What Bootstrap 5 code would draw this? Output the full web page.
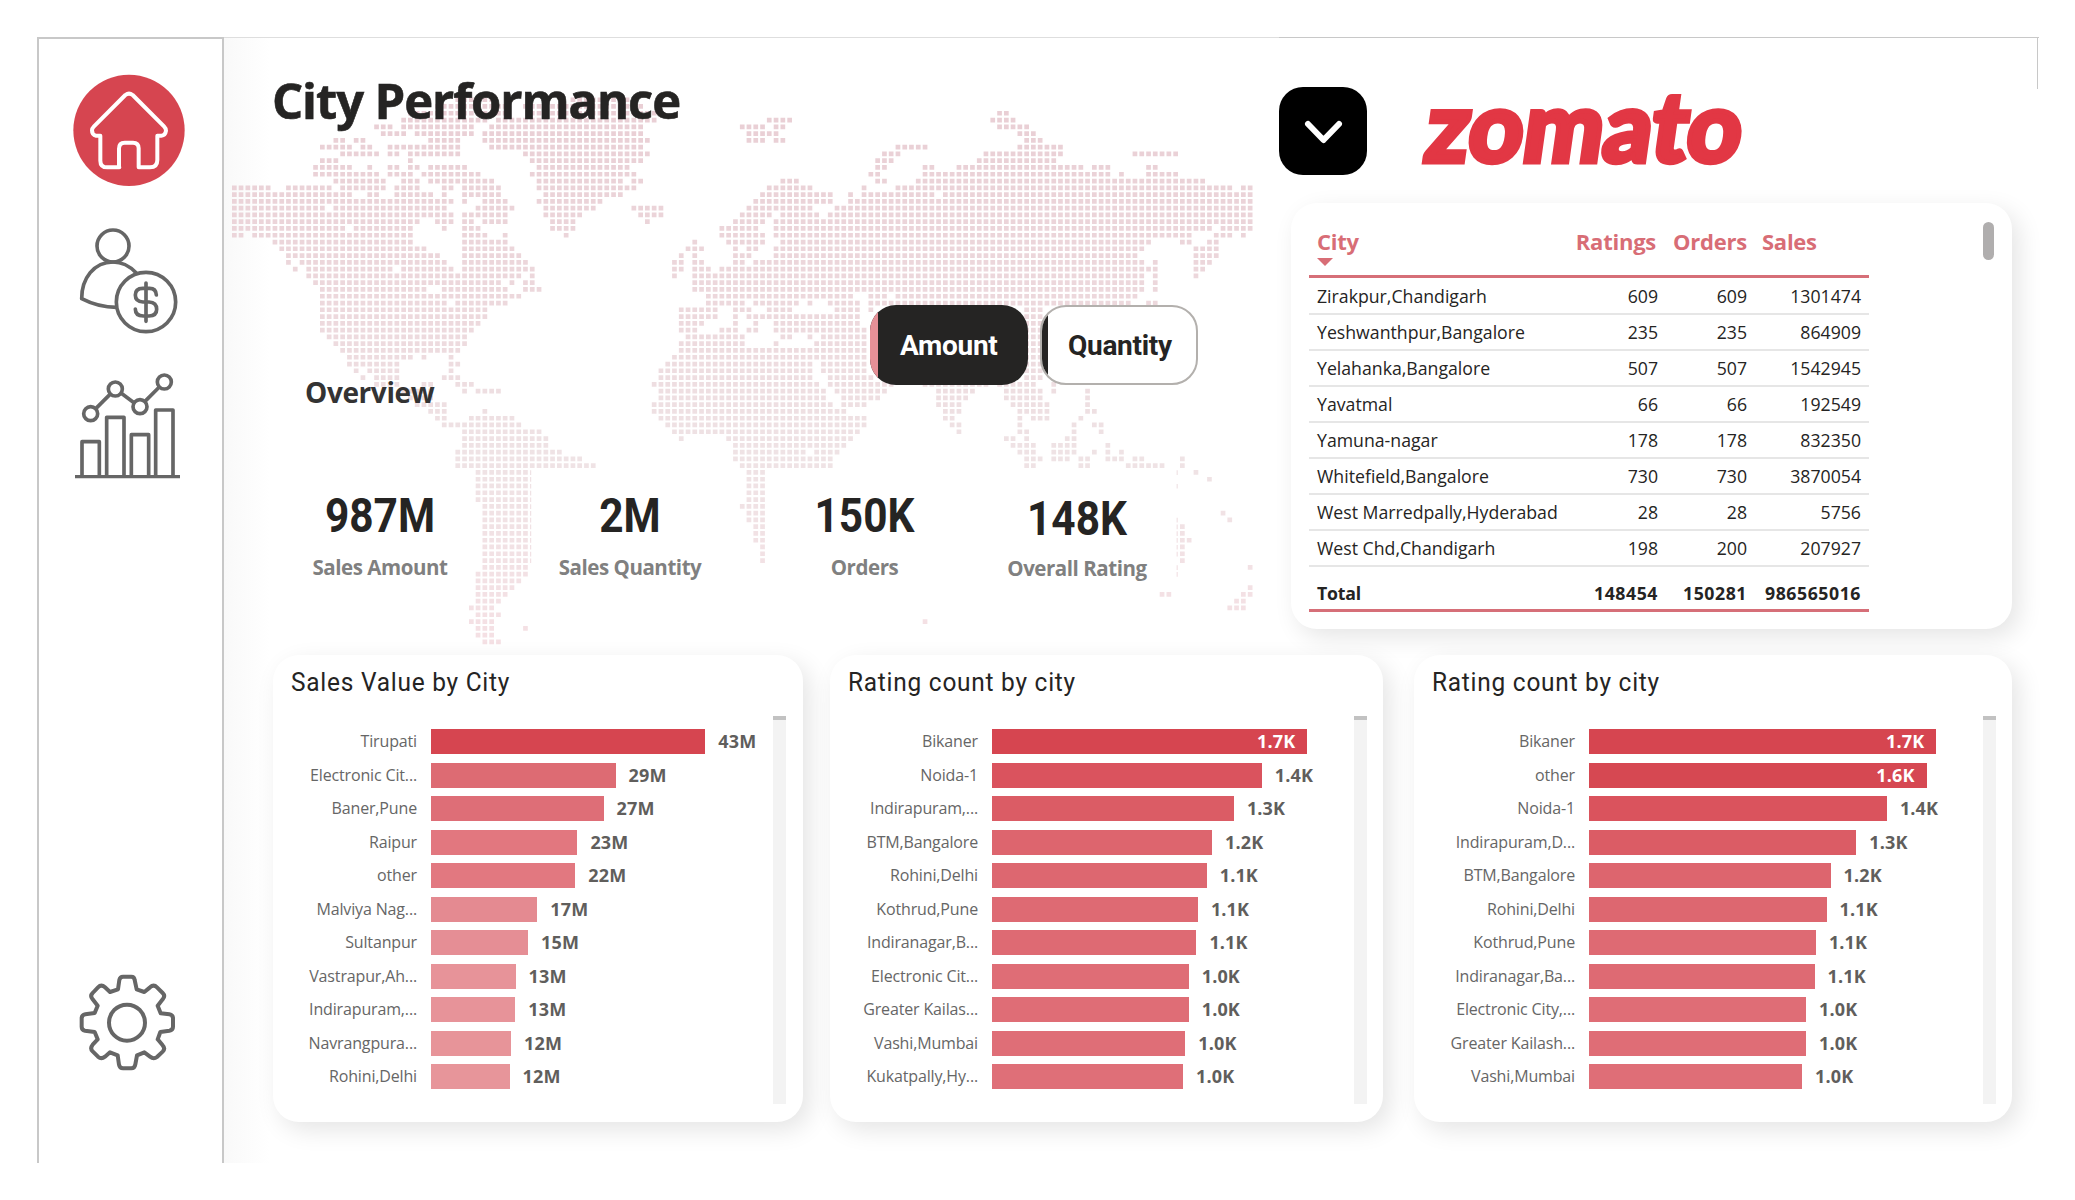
<!DOCTYPE html>
<html lang="en">
<head>
<meta charset="utf-8">
<title>City Performance</title>
<link rel="stylesheet" href="https://cdn.jsdelivr.net/npm/bootstrap@5.3.0/dist/css/bootstrap.min.css">
<style>
body{background:#fff;font-family:"Open Sans","Noto Sans",sans-serif;color:#252423;width:2075px;height:1200px;overflow:hidden}
.frame{margin:37px 0 0 37px;width:2002px;height:1126px}
.rail{width:187px;border:solid #c8c8c8;border-width:2px 2px 0 2px;padding:31px 2px 0 0}
.rail svg{width:120px;height:120px;fill:none;stroke:#666;flex:none}
.stage{background:linear-gradient(90deg,#f9f9f9 0,#fcfcfc 22px,#fff 46px);border-top:1px solid #dedede}
.upper{height:617px}
.hero{width:1055px}
.worldmap{position:absolute;left:0;top:0;pointer-events:none}
.hero-title{font-size:49px;font-weight:700;line-height:64px;letter-spacing:-1.1px;margin:30px 0 0 48px;-webkit-text-stroke:.6px #252423}
.switches{margin:173px 0 0 646px;gap:12px}
.switch{width:158px;height:80px;border-radius:26px;border:2px solid #b3b0ad;background:#fff;overflow:hidden;font:700 28px/76px Roboto,sans-serif;padding-left:19px}
.switch span{letter-spacing:-.3px;position:relative;top:1px}
.switch::before{content:"";width:8px;flex:none;background:#252423;margin-left:-21px;margin-right:20px}
.switch.active{background:#252423;border:0;padding:0;line-height:80px;color:#fff}
.switch.active::before{background:#e69097;margin:0 22px 0 0}
.overview{font-size:28px;font-weight:700;color:#333;line-height:36px;letter-spacing:-.4px;margin:-11px 0 0 81px}
.kpis{margin:81px 0 0 49px}
.kpi{height:116px;text-align:center}
.kpi b{display:block;font:700 49px/50px Roboto,sans-serif;letter-spacing:0;transform:scaleX(.865)}
.kpi-name{font-size:20.5px;font-weight:700;color:#808080;line-height:30px;margin-top:11px;letter-spacing:-.45px}
.side{flex:1;border:solid #c8c8c8;border-width:1px 0 0;margin-top:-1px}
.edge{position:absolute;right:1px;top:-1px;width:1px;height:52px;background:#c8c8c8}
.drop{width:88px;height:88px;border-radius:24px;background:#000;border:0;padding:0}
.panel{background:#fff;border-radius:26px;box-shadow:7px 8px 24px rgba(0,0,0,.105)}
.grid-panel{width:721px;height:426px;margin:28px 0 0 12px;padding:16px 18px 0}
.city-table{width:560px;font-size:17.7px;letter-spacing:0;border-collapse:collapse;table-layout:fixed}
.city-table th,.city-table td{padding:0 8px;text-align:right;white-space:nowrap}
.city-table th:nth-child(2),.city-table td:nth-child(2),.city-table th:nth-child(3),.city-table td:nth-child(3){padding-right:7px}
.city-table th:first-child,.city-table td:first-child{text-align:left}
.city-table thead th{height:57px;font-size:22px;color:#d86d76;vertical-align:top;line-height:28px;padding-top:8px;border-bottom:3px solid #d66f78;letter-spacing:-.25px}
.city-table thead th:last-child{text-align:left}
.city-table thead th:nth-child(2),.city-table thead th:nth-child(3){padding-right:9px}
.city-table td{height:36px;border-bottom:2px solid #e6e6e6;line-height:30px}
.city-table tbody tr:first-child td{height:38px;padding-top:2px}
.city-table tfoot td{height:44px;font-weight:700;border-bottom:3px solid #d66f78;padding-top:10px;letter-spacing:-.2px}
.city-table tfoot td+td{letter-spacing:.55px}
.sorter{width:0;height:0;border:8px solid transparent;border-top-color:#d86d76;border-bottom:0;margin-top:3px}
.thumb{width:11px;height:38px;border-radius:6px;background:#b0aeae;margin-top:3px}
.lower{padding-left:49px}
.chart-panel{height:467px;padding:12px 0 0 18px}
.chart-panel h2{font:400 26px/30px Roboto,sans-serif;letter-spacing:.8px;margin:0;height:48px;transform:scaleX(.94);transform-origin:left}
.bars{margin-top:14px}
.bar-line{height:25px;margin-bottom:8.5px;white-space:nowrap}
.bar-label{font-size:16px;color:#666;text-align:right;letter-spacing:-.15px;margin-right:14px;line-height:25px}
.bar-fill{height:25px;color:#fff;text-align:right;padding-right:12px;line-height:24px}
.bar-value{font-weight:700;font-size:18px;line-height:24px;color:#605e5c;letter-spacing:.15px}
.bar-fill .bar-value{color:#fff}
.bar-line>.bar-value{margin-left:13px}
.track{width:13px;height:384px;background:#f3f3f3;margin-top:5px}
.track::before{content:"";display:block;height:4px;background:#c2c2c2;margin-top:-4px}
</style>
<script src="https://cdn.jsdelivr.net/npm/bootstrap@5.3.0/dist/js/bootstrap.bundle.min.js"></script>
</head>
<body>
<div class="frame d-flex">
  <aside class="rail d-flex flex-column align-items-center flex-shrink-0">
    <svg viewBox="120 120 360 360"><circle cx="297" cy="301" r="167" fill="#d64550" stroke="none"/>
      <path stroke="#fff" stroke-width="12" stroke-linejoin="round" stroke-linecap="round" d="M268 412H232Q211 412 211 392V317H198Q186 315 186 301Q186 295 192 289L286 195Q297 187 308 195L402 289Q408 295 408 302Q406 316 394 317H382V390Q382 412 360 412H326V355Q326 338 309 338H284Q267 338 267 356V412"/></svg>
    <svg viewBox="120 580 360 360" style="margin-top:34px" stroke-width="11"><circle cx="249" cy="646" r="48"/><path d="M319 727Q288 694 249 694C192 694 155 743 155 804Q205 830 260 830" stroke-linejoin="round"/><circle cx="348" cy="814" r="89"/><path stroke-linecap="round" d="M348 757V872M379 793Q378 773 359 773H338Q316 773 316 793Q316 813 339 814H357Q380 815 380 836Q380 856 357 856H340Q316 856 316 835"/></svg>
    <svg viewBox="120 1010 360 360" style="margin-top:23px" stroke-width="11"><path d="M135 1339H450" stroke-width="10"/><path stroke-linejoin="round" d="M156 1337V1234H208V1337M230 1337V1161H282V1337M304 1337V1213H356V1337M377 1337V1139H429V1337"/><circle cx="182" cy="1150" r="21"/><circle cx="256" cy="1076" r="21"/><circle cx="330" cy="1129" r="21"/><circle cx="403" cy="1055" r="21"/><path d="M198 1134L240 1092M274 1089L312 1117M345 1113L388 1070"/></svg>
    <svg viewBox="120 70 360 360" style="margin-top:476px" stroke-width="12"><circle cx="291" cy="249" r="54"/>
      <path stroke-linejoin="round" d="M264 149L268 121Q270 111 279 111H304Q313 111 314 121L320 149L343 157L360 143Q371 133 381 143L398 160Q407 169 398 179L383 198L392 221L418 224Q429 226 429 236V261Q429 271 418 273L391 277L383 299L398 317Q407 327 398 336L381 352Q371 360 360 351L343 338L321 347L316 374Q314 386 304 386H279Q269 386 267 375L263 347L240 338L225 351Q214 360 204 351L188 335Q179 326 188 315L203 299L194 277L165 273Q155 271 155 261V236Q155 226 166 224L194 220L203 198L188 179Q179 169 188 160L204 143Q214 133 225 143L240 157Z"/></svg>
  </aside>
  <main class="stage flex-grow-1 position-relative">
    <svg class="worldmap" width="1055" height="618" viewBox="224 38 1055 618" aria-hidden="true">
      <defs><linearGradient id="fade" gradientUnits="userSpaceOnUse" x1="0" y1="95" x2="0" y2="650"><stop offset="0" stop-color="#e9ced4"/><stop offset=".4" stop-color="#edd9dd"/><stop offset=".65" stop-color="#efe3e5"/><stop offset="1" stop-color="#f5e0e4"/></linearGradient></defs>
      <path id="dots" fill="url(#fade)"/>
    </svg>
    <div class="edge"></div>
    <div class="upper d-flex position-relative">
      <section class="hero">
        <h1 class="hero-title">City Performance</h1>
        <div class="switches d-flex">
          <div class="switch active d-flex"><span>Amount</span></div>
          <div class="switch d-flex"><span>Quantity</span></div>
        </div>
        <div class="overview">Overview</div>
        <div class="kpis d-flex">
          <div class="kpi" style="width:214px"><b>987M</b><div class="kpi-name">Sales Amount</div></div>
          <div class="kpi" style="width:286px"><b>2M</b><div class="kpi-name">Sales Quantity</div></div>
          <div class="kpi" style="width:183px"><b>150K</b><div class="kpi-name">Orders</div></div>
          <div class="kpi pt-1" style="width:242px"><b style="line-height:47px">148K</b><div class="kpi-name">Overall Rating</div></div>
        </div>
      </section>
      <section class="side">
        <div class="d-flex" style="padding-top:49px">
          <button class="drop" aria-label="Open menu"><svg width="88" height="88" fill="none" stroke="#fff" stroke-width="6" stroke-linecap="round" stroke-linejoin="round"><path d="M29 37L44.5 53L60 37"/></svg></button>
          <svg width="360" height="88" viewBox="1390 87 360 88" style="margin-left:24px" overflow="visible"><text transform="translate(1421 161.500) skewX(-8)" font-family="Lato" font-weight="900" font-size="98" fill="#e23744" stroke="#e23744" stroke-width="5" textLength="316" lengthAdjust="spacingAndGlyphs">zomato</text></svg>
        </div>
        <div class="panel grid-panel d-flex justify-content-between">
          <div>
          <table class="city-table"><colgroup><col style="width:258px"><col style="width:98px"><col style="width:89px"><col style="width:115px"></colgroup>
            <thead><tr><th>City<div class="sorter"></div></th><th>Ratings</th><th>Orders</th><th>Sales</th></tr></thead>
            <tbody>
              <tr><td>Zirakpur,Chandigarh</td><td>609</td><td>609</td><td>1301474</td></tr>
              <tr><td>Yeshwanthpur,Bangalore</td><td>235</td><td>235</td><td>864909</td></tr>
              <tr><td>Yelahanka,Bangalore</td><td>507</td><td>507</td><td>1542945</td></tr>
              <tr><td>Yavatmal</td><td>66</td><td>66</td><td>192549</td></tr>
              <tr><td>Yamuna-nagar</td><td>178</td><td>178</td><td>832350</td></tr>
              <tr><td>Whitefield,Bangalore</td><td>730</td><td>730</td><td>3870054</td></tr>
              <tr><td>West Marredpally,Hyderabad</td><td>28</td><td>28</td><td>5756</td></tr>
              <tr><td>West Chd,Chandigarh</td><td>198</td><td>200</td><td>207927</td></tr>
            </tbody>
            <tfoot><tr><td>Total</td><td>148454</td><td>150281</td><td>986565016</td></tr></tfoot>
          </table></div>
          <div class="thumb"></div>
        </div>
      </section>
    </div>
    <div class="lower d-flex position-relative" id="charts"></div>
  </main>
</div>
<script>
// Land cells of the dotted world map: one entry per row, each a list of column runs
const land = `33-38 50-58|30-40 43-60|26-40 44-62 113-114|25-37 39-62 79-82 112-115|21-23 25-35 38-60 75-78 80-81 113-117|22-25 27-35 37-60 76-80 116-118|15-16 18-19 29-33 37-61 76-78 80-81 117-119|13-17 19-20 23-33 38-60 98-102 116-122|16-21 23-24 26-33 43-61 96-98 111-122 133-139|13-15 26 44-60 95-97 110-121
12-17 20 23-24 26-27 29-34 45-58 95-96 102-103 107-125 127-129 135-136|12-21 23-26 28-36 44-59 94-95 102-129 131 135-139|15-22 25-27 29-38 45-57 59-60 81-83 95-96 101-143|0-5 8-14 16-22 24-27 31-32 34-39 45-59 79-85 93 98-147 149-150|0-17 20-21 24-29 31 34-39 46-57 78-88 91 93-103 105-150|0-32 34 37-40 45-54 77-88 91-150|0-13 15-31 36-41 46-53 59-63 76-85 89-150|0-32 34-40 46-51 60-63 75-79 81-86 88-150|0-27 30-32 34-35 37-40 47-50 61 74-78 80-150|0-16 18-26 31 34-36 47-50 72-77 80-144 146-150
0-1 3-26 34-37 40 49 72-78 80-141 145-147 149|6-26 34-40 68 73-78 81-135 140-141 144-145|7-28 34-41 67-69 74 76-77 80-134 142-145|8-30 34-42 66 68 74-76 80-133 142-145|8 10-31 34-43 65-66 68-69 74-75 77-134 136 142-144|9 11-23 25-32 34-44 65-66 68-70 72-136 142-143|11-42 44 65 68-134 136 142|12-39 41 43-44 68-134 136|13-28 31-40 43-45 68-134 136|13-42 70-91 94-96 98-133
13-31 33-40 70-75 77-83 85 88-92 94-132 135-136|13-37 66-71 74-76 79-82 89-92 94 117-119|13-37 66-71 74 76-92 117-119|13-36 66-69 74 77 80-92 117-119|13-35 66-68 72-74 76-77 80-93 117-119|14-34 67-75 81-82 85 87-93 117-119|15-34 66-75 80 86-93 117-119|16-33 66-93 117-119|17-26 28 32 65-93 117-119|17-24 32-33 64-85 87-93 117-119
18 20-24 32 63-85 87-93 117-119|19 21-24 31-33 63-85 88-94 117-119|21-24 28-29 33-35 62-86 88-97 102-111 113-118 121|25-29 34 36-39 63-87 89-96 104-109 114-119 121 126|26-29 63-87 90-95 104-108 114-119 126|27-31 62-88 90-93 104-107 115-120 126|29-31 37 62-90 105-107 116-120 126-127|30-31 35-41 63-93 105-106 116 118-120 125|31-42 64-93 106-107 116 124 127-128|34-45 65-92 107 116-117 124 128
34-46 66 73-91 114-115 117 123-124|34-46 74-90 115-118 121-124 129|33-48 74-84 86-89 116-118 121-124 127 129 131|33-51 74-88 117-119 121-123 125-126 129-131 133-134 140|33-53 75-88 117-118 125-126 132-137 140|36-43 76-78 142|36-43 76-78 144|36-43 76-78|36-43 76-78|36-43 76-78
37-43 75-78|37-43 76-78 146|37-43 76-78 147|37-43 77-78 140|37-43 77-78 140|37-43 77-78 140-141|37-43 78 140|37-43 78 140|37-43 78 140|37-43 150
36-43|36-42|36-41 150|36-40 137-138 149-150|36-39 148-149|35-38 147-149|36-39|35-38 102|36-38 43|36-38
37-39`.split(/[|\n]/);
let d = "";
const pitch = 6.777, dot = 4.7;
land.forEach((row, r) => row.split(" ").forEach(run => {
  const [a, b = a] = run.split("-").map(Number);
  for (let c = a; c <= b; c++) d += `M${(234.3 + c * 6.772 - dot / 2).toFixed(1)} ${(99.7 + r * pitch - dot / 2).toFixed(1)}h${dot}v${dot}h-${dot}z`;
}));
[55, 57, 62, 63, 64, 65, 66, 67, 69, 70].forEach(r => d += `M1176.6 ${(97.6 + r * pitch).toFixed(1)}h1.2v${dot}h-1.2z`);
for (let r = 55; r < 69; r++) d += `M530 ${(97.6 + r * pitch).toFixed(1)}h1.2v${dot}h-1.2z`;
document.getElementById("dots").setAttribute("d", d);

const charts = [
  {title: "Sales Value by City", width: 530, gap: 0, label: 126, track: 500, rows: [
    ["Tirupati",274.3,"43M","#d64550"],["Electronic Cit...",184.6,"29M","#dd6b73"],["Baner,Pune",172.5,"27M","#de6e77"],["Raipur",146.4,"23M","#e2777f"],["other",144.3,"22M","#e27880"],["Malviya Nag...",106.3,"17M","#e48a91"],["Sultanpur",97,"15M","#e58e95"],["Vastrapur,Ah...",84.5,"13M","#e79399"],["Indirapuram,...",84.3,"13M","#e79399"],["Navrangpura...",80,"12M","#e79499"],["Rohini,Delhi",78.6,"12M","#e7959a"]]},
  {title: "Rating count by city", width: 553, gap: 27, label: 130, track: 523.5, rows: [
    ["Bikaner",315.3,"1.7K","#d64550",1],["Noida-1",269.8,"1.4K","#da535e"],["Indirapuram,...",241.9,"1.3K","#db5c65"],["BTM,Bangalore",220,"1.2K","#dd656e"],["Rohini,Delhi",214.7,"1.1K","#dd6770"],["Kothrud,Pune",205.9,"1.1K","#de6a73"],["Indiranagar,B...",204.4,"1.1K","#de6a73"],["Electronic Cit...",196.7,"1.0K","#df6d76"],["Greater Kailas...",196.7,"1.0K","#df6d76"],["Vashi,Mumbai",193.3,"1.0K","#df6e77"],["Kukatpally,Hy...",191,"1.0K","#df6f78"]]},
  {title: "Rating count by city", width: 598, gap: 31, label: 143, track: 568.5, rows: [
    ["Bikaner",347.4,"1.7K","#d64550",1],["other",337.5,"1.6K","#d64852",1],["Noida-1",297.9,"1.4K","#da535d"],["Indirapuram,D...",267.3,"1.3K","#db5c65"],["BTM,Bangalore",241.5,"1.2K","#dd656e"],["Rohini,Delhi",237.6,"1.1K","#dd6770"],["Kothrud,Pune",226.9,"1.1K","#de6a73"],["Indiranagar,Ba...",225.6,"1.1K","#de6a73"],["Electronic City,...",217,"1.0K","#df6d76"],["Greater Kailash...",217,"1.0K","#df6d76"],["Vashi,Mumbai",213,"1.0K","#df6e77"]]}
];
document.getElementById("charts").innerHTML = charts.map(c => `
  <section class="panel chart-panel flex-shrink-0" style="width:${c.width}px;margin-left:${c.gap}px">
    <h2>${c.title}</h2>
    <div class="d-flex">
      <div class="bars" style="width:${c.track - 18}px">${c.rows.map(([n, w, v, col, inside]) => `
        <div class="bar-line d-flex"><div class="bar-label" style="width:${c.label}px">${n}</div><div class="bar-fill" style="width:${w}px;background:${col}">${inside ? `<span class="bar-value">${v}</span>` : ""}</div>${inside ? "" : `<span class="bar-value">${v}</span>`}</div>`).join("")}
      </div>
      <div class="track"></div>
    </div>
  </section>`).join("");
</script>
</body>
</html>
